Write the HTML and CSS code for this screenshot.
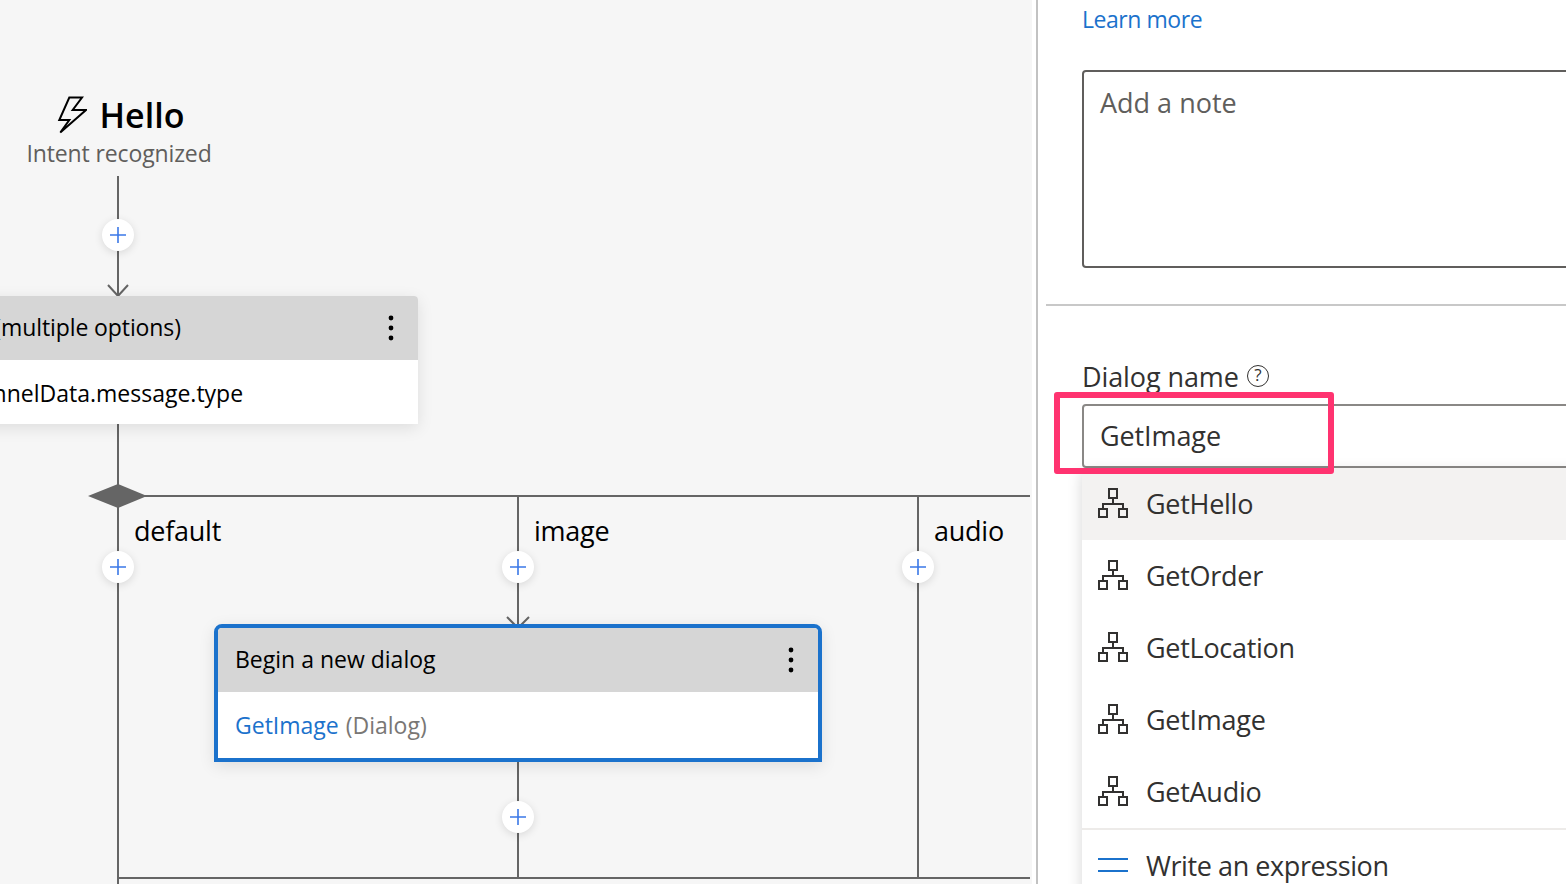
FILE: index.html
```html
<!DOCTYPE html>
<html lang="en">
<head>
  <meta charset="UTF-8">
  <meta name="viewport" content="width=device-width, initial-scale=1.0">
  <title>Dialog editor</title>
  <link rel="stylesheet" href="styles.css">
</head>
<body>
  <svg width="0" height="0" class="defs">
    <symbol id="tree" viewBox="0 0 30 30">
      <path d="M11 1h8v9h-8zM1 21h8v8H1zM21 21h8v8h-8zM15 10v6M5 21v-5h20v5" fill="none" stroke="#323130" stroke-width="2"/>
    </symbol>
    <symbol id="plus" viewBox="0 0 16 16">
      <path d="M0 8h16M8 0v16" fill="none" stroke="#3b78e7" stroke-width="1.6"/>
    </symbol>
    <symbol id="kebab" viewBox="0 0 6 26">
      <circle cx="3" cy="3" r="2.4"/><circle cx="3" cy="13" r="2.4"/><circle cx="3" cy="23" r="2.4"/>
    </symbol>
  </svg>

  <main class="canvas">
    <!-- edges of the flow -->
    <svg class="edges" width="1032" height="884">
      <g fill="none" stroke="#656565" stroke-width="2">
        <path d="M118 176V296M108 285l10 11 10-11"/>
        <path d="M118 424V884M118 878H1030M118 496H1030"/>
        <path d="M518 496V628M507 617l11 11 11-11"/>
        <path d="M918 496V878M518 760V878"/>
      </g>
      <path d="M88 496l30-12 29 12-29 12z" fill="#656565"/>
    </svg>

    <header class="trigger">
      <h1 class="trigger-title">
        <svg class="bolt" width="30" height="38" viewBox="0 0 30 38"><path d="M25 1.500H12.300L2.300 24H12.300L3.300 36.500 29 14H15.700z" fill="none" stroke="#000" stroke-width="2"/></svg>
        Hello
      </h1>
      <p class="trigger-sub">Intent recognized</p>
    </header>

    <button class="add add-a"><svg width="16" height="16"><use href="#plus"/></svg></button>
    <button class="add add-b"><svg width="16" height="16"><use href="#plus"/></svg></button>
    <button class="add add-c"><svg width="16" height="16"><use href="#plus"/></svg></button>
    <button class="add add-d"><svg width="16" height="16"><use href="#plus"/></svg></button>
    <button class="add add-e"><svg width="16" height="16"><use href="#plus"/></svg></button>

    <span class="branch branch-a">default</span>
    <span class="branch branch-b">image</span>
    <span class="branch branch-c">audio</span>

    <section class="card card-switch">
      <div class="card-head">
        <span>Branch: Switch (multiple options)</span>
        <svg class="kebab" width="6" height="26"><use href="#kebab"/></svg>
      </div>
      <div class="card-body"><span>turn.activity.channelData.message.type</span></div>
    </section>

    <section class="card card-dialog">
      <div class="card-head">
        <span>Begin a new dialog</span>
        <svg class="kebab" width="6" height="26"><use href="#kebab"/></svg>
      </div>
      <div class="card-body"><a class="link">GetImage</a> <span class="muted">(Dialog)</span></div>
    </section>
  </main>

  <aside class="panel">
    <a class="link learn">Learn more</a>
    <div class="note">Add a note</div>
    <hr class="rule">
    <label class="field-label">Dialog name <span class="help">?</span></label>
    <div class="field-wrap">
      <div class="input">GetImage</div>
      <ul class="menu">
        <li class="menu-item active"><svg width="30" height="30"><use href="#tree"/></svg>GetHello</li>
        <li class="menu-item"><svg width="30" height="30"><use href="#tree"/></svg>GetOrder</li>
        <li class="menu-item"><svg width="30" height="30"><use href="#tree"/></svg>GetLocation</li>
        <li class="menu-item"><svg width="30" height="30"><use href="#tree"/></svg>GetImage</li>
        <li class="menu-item"><svg width="30" height="30"><use href="#tree"/></svg>GetAudio</li>
        <li class="menu-item expr"><span class="expr-icon"></span>Write an expression</li>
      </ul>
      <div class="callout"></div>
    </div>
  </aside>
</body>
</html>
```

FILE: styles.css
```css
* {
  box-sizing: border-box;
}
html, body {
  height: 100%;
}
body {
  margin: 0;
  display: flex;
  overflow: hidden;
  background: #fff;
  color: #323130;
  font-family: "Open Sans", "Noto Sans", sans-serif;
}
.defs {
  position: absolute;
}

/* canvas */
.canvas {
  position: relative;
  flex: 0 0 1032px;
  height: 100%;
  overflow: hidden;
  background: #f6f6f6;
}
.edges {
  position: absolute;
  top: 0;
  left: 0;
}
.trigger {
  position: absolute;
  top: 92px;
  left: 0;
  width: 238px;
  text-align: center;
}
.trigger-title {
  display: flex;
  justify-content: center;
  align-items: center;
  gap: 13px;
  margin: 0;
  height: 46px;
  padding-left: 3px;
  font-size: 34px;
  font-weight: 600;
  color: #000;
}
.trigger-sub {
  margin: 0;
  height: 30px;
  line-height: 30px;
  font-size: 23px;
  letter-spacing: -0.12px;
  color: #605e5c;
}
.add {
  position: absolute;
  width: 32px;
  height: 32px;
  padding: 0;
  display: flex;
  align-items: center;
  justify-content: center;
  border: 0;
  border-radius: 50%;
  background: #fff;
  box-shadow: 0 2px 8px rgba(0, 0, 0, 0.12);
}
.add-a { left: 102px; top: 219px; }
.add-b { left: 102px; top: 551px; }
.add-c { left: 502px; top: 551px; }
.add-d { left: 902px; top: 551px; }
.add-e { left: 502px; top: 801px; }
.branch {
  position: absolute;
  top: 511px;
  line-height: 40px;
  font-size: 27px;
  letter-spacing: -0.25px;
  color: #000;
}
.branch-a { left: 134px; }
.branch-b { left: 534px; }
.branch-c { left: 934px; }

/* cards */
.card {
  position: absolute;
  color: #000;
  font-size: 23px;
  background: #fff;
  box-shadow: 0 4px 16px rgba(0, 0, 0, 0.1);
}
.card-head {
  display: flex;
  align-items: center;
  justify-content: space-between;
  height: 64px;
  white-space: nowrap;
  background: #d6d6d6;
}
.card-head span {
  margin-top: -2px;
}
.card-body {
  display: flex;
  align-items: center;
  gap: 7px;
  white-space: nowrap;
}
.card-switch {
  left: -182px;
  top: 296px;
  width: 600px;
  border-radius: 4px 4px 0 0;
}
.card-switch .card-head {
  padding: 0 24px 0 14px;
  letter-spacing: -0.1px;
  border-radius: 4px 4px 0 0;
}
.card-switch .card-body {
  height: 64px;
  padding: 2px 0 0 4px;
}
.card-dialog {
  left: 214px;
  top: 624px;
  width: 608px;
  border: 4px solid #1b72cc;
  border-radius: 8px 8px 0 0;
}
.card-dialog .card-head {
  padding: 0 24px 0 17px;
  border-radius: 4px 4px 0 0;
}
.card-dialog .card-body {
  height: 66px;
  padding-left: 17px;
}
.link {
  color: #1b72cc;
}
.muted {
  color: #797775;
}

/* right panel */
.panel {
  flex: 1;
  min-width: 0;
  margin-left: 4px;
  padding-left: 44px;
  height: 100%;
  overflow: hidden;
  border-left: 2px solid #c2c2c2;
}
.learn {
  display: block;
  height: 40px;
  line-height: 39px;
  font-size: 23px;
  letter-spacing: -0.45px;
}
.note {
  height: 198px;
  margin: 30px -20px 0 0;
  padding: 12px 16px;
  line-height: 37px;
  font-size: 27px;
  color: #605e5c;
  border: 2px solid #605e5c;
  border-radius: 4px;
}
.rule {
  height: 2px;
  margin: 36px 0 0 -36px;
  border: 0;
  background: #c8c8c8;
}
.field-label {
  display: flex;
  align-items: center;
  gap: 8px;
  height: 40px;
  margin-top: 50px;
  font-size: 27px;
  letter-spacing: -0.1px;
}
.help {
  width: 22px;
  height: 22px;
  line-height: 18px;
  text-align: center;
  font-size: 17px;
  border: 1.500px solid #323130;
  border-radius: 50%;
}
.field-wrap {
  position: relative;
  margin-top: 8px;
}
.input {
  height: 64px;
  margin-right: -20px;
  padding: 0 16px;
  line-height: 60px;
  font-size: 27px;
  letter-spacing: -0.1px;
  border: 2px solid #8a8886;
  border-radius: 4px;
}
.menu {
  margin: 0 -20px 0 0;
  padding: 0;
  list-style: none;
  background: #fff;
  box-shadow: 0 4px 14px rgba(0, 0, 0, 0.16);
}
.menu-item {
  display: flex;
  align-items: center;
  gap: 18px;
  height: 72px;
  padding: 0 0 2px 16px;
  font-size: 27px;
  letter-spacing: -0.28px;
}
.menu-item.active {
  background: #f3f2f1;
}
.menu-item.expr {
  padding-bottom: 0;
  letter-spacing: -0.42px;
  border-top: 2px solid #edebe9;
}
.expr-icon {
  width: 30px;
  height: 14px;
  border-top: 2px solid #1b72cc;
  border-bottom: 2px solid #1b72cc;
}
.callout {
  position: absolute;
  top: -12px;
  left: -28px;
  width: 280px;
  height: 82px;
  border: 6px solid #ff3370;
  border-radius: 3px;
}
```
